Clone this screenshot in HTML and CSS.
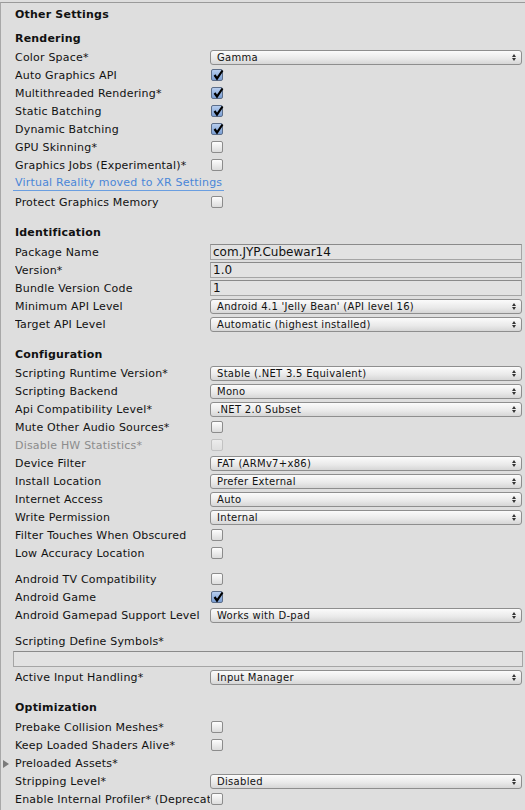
FILE: index.html
```html
<!DOCTYPE html>
<html>

<head>
    <meta charset="utf-8" />
    <title>Other Settings</title>
    <link rel="stylesheet" href="styles.css">
</head>

<body>
    <div class="panel">
        <div class="title">Other Settings</div>

        <div class="section first tight">
            <div class="head">Rendering</div>
            <div class="row"><span class="label">Color Space*</span><div class="drop">Gamma</div></div>
            <div class="row"><span class="label">Auto Graphics API</span><span class="check on"><svg viewBox="0 0 12 12"><path d="M2.5 6 L5 9.5 L10.5 1.5" /></svg></span></div>
            <div class="row"><span class="label">Multithreaded Rendering*</span><span class="check on"><svg viewBox="0 0 12 12"><path d="M2.5 6 L5 9.5 L10.5 1.5" /></svg></span></div>
            <div class="row"><span class="label">Static Batching</span><span class="check on"><svg viewBox="0 0 12 12"><path d="M2.5 6 L5 9.5 L10.5 1.5" /></svg></span></div>
            <div class="row"><span class="label">Dynamic Batching</span><span class="check on"><svg viewBox="0 0 12 12"><path d="M2.5 6 L5 9.5 L10.5 1.5" /></svg></span></div>
            <div class="row"><span class="label">GPU Skinning*</span><span class="check"></span></div>
            <div class="row"><span class="label">Graphics Jobs (Experimental)*</span><span class="check"></span></div>
            <div class="link-row"><span class="link">Virtual Reality moved to XR Settings</span></div>
            <div class="row"><span class="label">Protect Graphics Memory</span><span class="check"></span></div>
        </div>

        <div class="section">
            <div class="head">Identification</div>
            <div class="row"><span class="label">Package Name</span><div class="field">com.JYP.Cubewar14</div></div>
            <div class="row"><span class="label">Version*</span><div class="field">1.0</div></div>
            <div class="row"><span class="label">Bundle Version Code</span><div class="field">1</div></div>
            <div class="row"><span class="label">Minimum API Level</span><div class="drop">Android 4.1 'Jelly Bean' (API level 16)</div></div>
            <div class="row"><span class="label">Target API Level</span><div class="drop">Automatic (highest installed)</div></div>
        </div>

        <div class="section tight">
            <div class="head">Configuration</div>
            <div class="row"><span class="label">Scripting Runtime Version*</span><div class="drop">Stable (.NET 3.5 Equivalent)</div></div>
            <div class="row"><span class="label">Scripting Backend</span><div class="drop">Mono</div></div>
            <div class="row"><span class="label">Api Compatibility Level*</span><div class="drop">.NET 2.0 Subset</div></div>
            <div class="row"><span class="label">Mute Other Audio Sources*</span><span class="check"></span></div>
            <div class="row"><span class="label muted">Disable HW Statistics*</span><span class="check off"></span></div>
            <div class="row"><span class="label">Device Filter</span><div class="drop">FAT (ARMv7+x86)</div></div>
            <div class="row"><span class="label">Install Location</span><div class="drop">Prefer External</div></div>
            <div class="row"><span class="label">Internet Access</span><div class="drop">Auto</div></div>
            <div class="row"><span class="label">Write Permission</span><div class="drop">Internal</div></div>
            <div class="row"><span class="label">Filter Touches When Obscured</span><span class="check"></span></div>
            <div class="row"><span class="label">Low Accuracy Location</span><span class="check"></span></div>

            <div class="spacer"></div>
            <div class="row"><span class="label">Android TV Compatibility</span><span class="check"></span></div>
            <div class="row"><span class="label">Android Game</span><span class="check on"><svg viewBox="0 0 12 12"><path d="M2.5 6 L5 9.5 L10.5 1.5" /></svg></span></div>
            <div class="row"><span class="label">Android Gamepad Support Level</span><div class="drop">Works with D-pad</div></div>

            <div class="spacer"></div>
            <div class="row"><span class="label">Scripting Define Symbols*</span></div>
            <div class="wide-row"><div class="field"></div></div>
            <div class="row"><span class="label">Active Input Handling*</span><div class="drop">Input Manager</div></div>
        </div>

        <div class="section">
            <div class="head">Optimization</div>
            <div class="row"><span class="label">Prebake Collision Meshes*</span><span class="check"></span></div>
            <div class="row"><span class="label">Keep Loaded Shaders Alive*</span><span class="check"></span></div>
            <div class="row"><span class="label foldout">Preloaded Assets*</span></div>
            <div class="row"><span class="label">Stripping Level*</span><div class="drop">Disabled</div></div>
            <div class="row"><span class="label">Enable Internal Profiler* (Deprecated)</span><span class="check"></span></div>
        </div>
    </div>
</body>

</html>
```

FILE: styles.css
```css
body {
    margin: 0;
    background-color: #dedede;
    font-family: "DejaVu Sans", sans-serif;
    font-size: 11px;
    letter-spacing: 0.2px;
    color: #111;
}

.panel {
    margin-top: 2px;
    border-top: 1px solid #9a9a9a;
    border-left: 1px solid #a8a8a8;
    min-height: 807px;
    padding-top: 3px;
}

.title {
    height: 18px;
    line-height: 18px;
    padding-left: 14px;
    font-weight: bold;
}

.section {
    margin-top: 12px;
}

.section.first {
    margin-top: 5px;
}

.head {
    line-height: 18px;
    padding-top: 1px;
    padding-bottom: 1px;
    padding-left: 14px;
    font-weight: bold;
}

.tight .head {
    padding-bottom: 0;
}

.row {
    display: flex;
    align-items: center;
    height: 18px;
    padding-left: 14px;
    padding-right: 3px;
}

.label {
    flex: 0 0 195px;
    width: 195px;
    white-space: nowrap;
    overflow: hidden;
    position: relative;
}

.label.muted {
    color: #8c8c8c;
}

.label.foldout {
    overflow: visible;
}

.label.foldout::before {
    content: "";
    position: absolute;
    left: -12px;
    top: 3px;
    border-left: 6px solid #7a7a7a;
    border-top: 4px solid transparent;
    border-bottom: 4px solid transparent;
}

.drop {
    flex: 1;
    position: relative;
    height: 13px;
    line-height: 13px;
    padding-left: 6px;
    font-size: 10px;
    letter-spacing: 0.3px;
    border: 1px solid #8e8e8e;
    border-radius: 3px;
    background: linear-gradient(#fbfbfb, #e9e9e9 60%, #d6d6d6);
    white-space: nowrap;
    overflow: hidden;
}

.drop::before,
.drop::after {
    content: "";
    position: absolute;
    right: 5px;
    border-left: 2px solid transparent;
    border-right: 2px solid transparent;
}

.drop::before {
    top: 3px;
    border-bottom: 3px solid #333;
}

.drop::after {
    top: 7px;
    border-top: 3px solid #333;
}

.field {
    flex: 1;
    height: 14px;
    line-height: 14px;
    padding-left: 2px;
    font-size: 12px;
    letter-spacing: 0;
    border: 1px solid #a5a5a5;
    border-top-color: #8a8a8a;
    background-color: #e2e2e2;
    white-space: nowrap;
}

.wide-row {
    display: flex;
    align-items: center;
    height: 18px;
    padding-left: 12px;
    padding-right: 2px;
}

.check {
    box-sizing: border-box;
    width: 12px;
    height: 12px;
    margin-left: 1px;
    border: 1px solid #8c8c8c;
    border-radius: 2px;
    background: linear-gradient(#fdfdfd, #dcdcdc);
    position: relative;
}

.check.on {
    border-color: #5c6e8a;
    background: linear-gradient(#b6cdee, #7b9fd4);
}

.check.off {
    border-color: #c2c2c2;
    background: linear-gradient(#ececec, #dedede);
}

.check svg {
    position: absolute;
    left: 0;
    top: -1px;
    width: 12px;
    height: 12px;
    overflow: visible;
}

.check path {
    fill: none;
    stroke: #000;
    stroke-width: 2.2;
}

.link-row {
    height: 19px;
    line-height: 18px;
    padding-left: 12px;
}

.link {
    display: inline-block;
    padding: 0 2px;
    line-height: 15px;
    color: #4a86d8;
    border-bottom: 1px solid #6a9ee0;
}

.spacer {
    height: 8px;
}
```
